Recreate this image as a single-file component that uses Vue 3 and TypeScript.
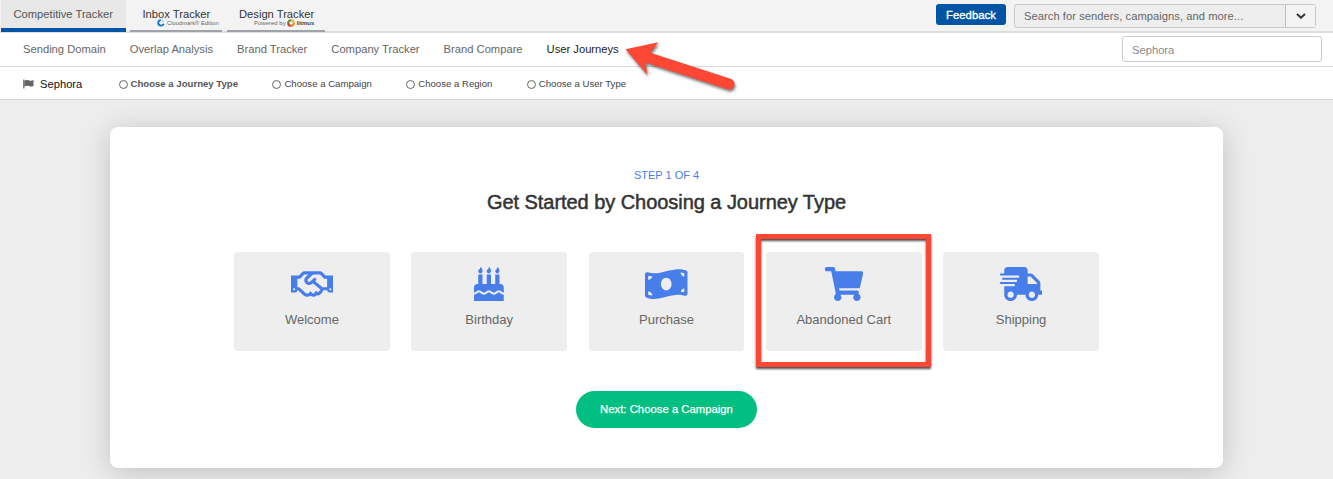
<script setup lang="ts">
interface Tile {
  label: string
  viewBox: string
  path: string
}

const flame = 'c-17.75 0-32-14.25-32-32 0-31 32-23 32-64 12 0 32 29.5 32 56s-14.25 40-32 40z'

const tiles: Tile[] = [
  {
    label: 'Welcome',
    viewBox: '0 0 640 512',
    path: 'M519.2 127.9l-47.6-47.6A56.252 56.252 0 0 0 432 64H205.2c-14.8 0-29.1 5.9-39.6 16.3L118 127.9H0v255.7h64c17.6 0 31.8-14.2 31.9-31.7h9.1l84.6 76.4c30.9 25.1 73.8 25.7 105.6 3.8 12.5 10.8 26 15.9 41.1 15.9 18.2 0 35.3-7.4 48.8-24 22.1 8.7 48.2 2.6 64-16.8l26.2-32.3c5.6-6.9 9.1-14.8 10.9-23h57.9c.1 17.5 14.4 31.7 31.9 31.7h64V127.9H519.2zM48 351.6c-8.8 0-16-7.2-16-16s7.2-16 16-16 16 7.2 16 16c0 8.9-7.2 16-16 16zm390-6.9l-26.1 32.2c-2.8 3.4-7.8 4-11.3 1.2l-23.9-19.4-30 36.5c-6 7.3-15 4.8-18 2.4l-36.8-31.5-15.6 19.2c-13.9 17.1-39.2 19.7-55.3 6.6l-97.3-88H96V175.8h41.9l61.7-61.6c2-.8 3.7-1.5 5.7-2.3H262l-38.7 35.5c-29.4 26.9-31.1 72.3-4.4 101.3 14.8 16.2 61.2 41.2 101.5 4.4l8.2-7.5 108.2 87.8c3.4 2.8 3.9 7.9 1.2 11.3zm106-40.8h-69.2c-2.3-2.8-4.9-5.4-7.7-7.7l-102.7-83.4 12.5-11.4c6.5-6 7-16.1 1-22.6L367 167.1c-6-6.5-16.1-6.9-22.6-1l-55.2 50.6c-9.5 8.7-25.7 9.4-34.6 0-9.3-9.9-8.5-25.1 1.2-33.9l65.6-60.2c7.4-6.8 17-10.5 27-10.5l83.7-.2c2.1 0 4.1.8 5.5 2.3l61.7 61.6H544v128zm48 47.7c-8.8 0-16-7.2-16-16s7.2-16 16-16 16 7.2 16 16c0 8.9-7.2 16-16 16z',
  },
  {
    label: 'Birthday',
    viewBox: '0 0 448 512',
    path:
      'M448 384c-28.02 0-31.26-32-74.5-32-43.43 0-46.825 32-74.75 32-27.695 0-31.454-32-74.75-32-42.842 0-47.218 32-74.5 32-28.148 0-31.202-32-74.75-32-43.547 0-46.653 32-74.75 32v-80c0-26.5 21.5-48 48-48h16V112h64v144h64V112h64v144h64V112h64v144h16c26.5 0 48 21.5 48 48v80zm0 128H0v-96c43.356 0 46.767-32 74.75-32 27.951 0 31.253 32 74.75 32 42.843 0 47.217-32 74.5-32 28.148 0 31.201 32 74.75 32 43.357 0 46.767-32 74.75-32 27.488 0 31.252 32 74.5 32v96z' +
      `M96 96${flame}M224 96${flame}M352 96${flame}`,
  },
  {
    label: 'Purchase',
    viewBox: '0 0 640 512',
    path: 'M621.16 54.46C582.37 38.19 543.55 32 504.75 32c-123.17-.01-246.33 62.34-369.5 62.34-30.89 0-61.76-3.92-92.65-13.72-3.47-1.1-6.95-1.62-10.35-1.62C15.04 79 0 92.32 0 110.81v317.26c0 12.63 7.23 24.6 18.84 29.46C57.63 473.81 96.45 480 135.25 480c123.17 0 246.34-62.35 369.51-62.35 30.89 0 61.76 3.92 92.65 13.72 3.47 1.1 6.95 1.62 10.35 1.62 17.21 0 32.25-13.32 32.25-31.81V83.93c-.01-12.64-7.24-24.6-18.85-29.47zM48 132.22c20.12 5.04 41.12 7.57 62.72 8.93C104.84 170.54 79 192.69 48 192.69v-60.47zm0 285v-47.78c34.37 0 62.18 27.27 63.71 61.4-22.53-1.81-43.59-6.31-63.71-13.62zM320 352c-44.19 0-80-42.99-80-96 0-53.02 35.82-96 80-96s80 42.98 80 96c0 53.03-35.83 96-80 96zm272 27.78c-17.52-4.39-35.71-6.85-54.32-8.44 5.87-26.08 27.5-45.88 54.32-49.28v57.72zm0-236.11c-30.89-3.91-54.86-29.7-55.81-61.55 19.54 2.17 38.09 6.23 55.81 12.66v48.89z',
  },
  {
    label: 'Abandoned Cart',
    viewBox: '0 0 576 512',
    path: 'M528.12 301.319l47.273-208C578.806 78.301 567.391 64 551.99 64H159.208l-9.166-44.81C147.758 8.021 137.93 0 126.529 0H24C10.745 0 0 10.745 0 24v16c0 13.255 10.745 24 24 24h69.883l70.248 343.435C147.325 417.1 136 435.222 136 456c0 30.928 25.072 56 56 56s56-25.072 56-56c0-15.674-6.447-29.835-16.824-40h209.647C430.447 426.165 424 440.326 424 456c0 30.928 25.072 56 56 56s56-25.072 56-56c0-22.172-12.888-41.332-31.579-50.405l5.517-24.276c3.413-15.018-8.002-29.319-23.403-29.319H218.117l-6.545-32h293.145c11.206 0 20.92-7.754 23.403-18.681z',
  },
  {
    label: 'Shipping',
    viewBox: '0 0 640 512',
    path: 'M624 352h-16V243.9c0-12.7-5.1-24.9-14.1-33.9L494 110.1c-9-9-21.2-14.1-33.9-14.1H416V48c0-26.5-21.5-48-48-48H112C85.5 0 64 21.5 64 48v48H8c-4.4 0-8 3.6-8 8v16c0 4.4 3.6 8 8 8h272c4.4 0 8 3.6 8 8v16c0 4.4-3.6 8-8 8H40c-4.4 0-8 3.6-8 8v16c0 4.4 3.6 8 8 8h208c4.4 0 8 3.6 8 8v16c0 4.4-3.6 8-8 8H8c-4.4 0-8 3.6-8 8v16c0 4.4 3.6 8 8 8h208c4.4 0 8 3.6 8 8v16c0 4.4-3.6 8-8 8H64v128c0 53 43 96 96 96s96-43 96-96h128c0 53 43 96 96 96s96-43 96-96h48c8.8 0 16-7.2 16-16v-32c0-8.8-7.2-16-16-16zM160 464c-26.5 0-48-21.5-48-48s21.5-48 48-48 48 21.5 48 48-21.5 48-48 48zm320 0c-26.5 0-48-21.5-48-48s21.5-48 48-48 48 21.5 48 48-21.5 48-48 48zm80-208H416V144h44.1l99.9 99.9V256z',
  },
]

const navItems = ['Sending Domain', 'Overlap Analysis', 'Brand Tracker', 'Company Tracker', 'Brand Compare', 'User Journeys']
const activeNav = 'User Journeys'
const steps = ['Choose a Journey Type', 'Choose a Campaign', 'Choose a Region', 'Choose a User Type']
const highlighted = 'Abandoned Cart'
</script>

<template>
  <div class="page">
    <header class="top">
      <div class="tab current"><span class="tab-name">Competitive Tracker</span></div>
      <div class="tab inbox">
        <span class="tab-name">Inbox Tracker</span>
        <span class="byline">
          <svg class="cloud" viewBox="0 0 8 8">
            <path d="M4.2 1.200A2.900 2.900 0 1 0 7 5" fill="none" stroke="#1672c4" stroke-width="2" />
            <path d="M4 1A3 3 0 0 1 6.9 3.8" fill="none" stroke="#b5d9f1" stroke-width="1.4" />
          </svg>
          <span>Cloudmark® Edition</span>
        </span>
      </div>
      <div class="tab design">
        <span class="tab-name">Design Tracker</span>
        <span class="byline">
          <span>Powered by</span>
          <svg class="litmus" viewBox="0 0 8 8">
            <g fill="none" stroke-width="2.1">
              <path d="M4 1.2A2.8 2.8 0 0 1 6.8 4" stroke="#f0ae20" />
              <path d="M6.8 4A2.8 2.8 0 0 1 4 6.8" stroke="#ef8b22" />
              <path d="M4 6.8A2.8 2.8 0 0 1 1.2 4" stroke="#cf3d2e" />
              <path d="M1.2 4A2.8 2.8 0 0 1 4 1.2" stroke="#5d8b3b" />
            </g>
          </svg>
          <b>litmus</b>
        </span>
      </div>
      <div class="tools">
        <button class="feedback">Feedback</button>
        <div class="search">
          <span class="search-text">Search for senders, campaigns, and more...</span>
          <span class="caret">
            <svg viewBox="0 0 10 6"><path d="M1 1l4 3.7L9 1" fill="none" stroke="#333" stroke-width="2" /></svg>
          </span>
        </div>
      </div>
    </header>

    <nav class="nav">
      <a v-for="item in navItems" :key="item" :class="{ active: item === activeNav }">{{ item }}</a>
      <div class="brand-input">Sephora</div>
    </nav>

    <div class="steps">
      <div class="brand">
        <svg class="flag" viewBox="0 0 11 10">
          <path d="M.8 .5v9" stroke="#666" stroke-width="1.2" />
          <path d="M1.300 1.600C3.200.8 4.700.7 6.100 1.400s2.600.4 4.400-.3v5.900c-1.800.8-3 .8-4.400.1S3.200 6.600 1.300 7.500z" fill="#666" />
        </svg>
        <span>Sephora</span>
      </div>
      <div v-for="(step, i) in steps" :key="step" class="step" :class="{ bold: i === 0 }">
        <i class="ring"></i><span>{{ step }}</span>
      </div>
    </div>

    <main class="card">
      <div class="count">STEP 1 OF 4</div>
      <h1>Get Started by Choosing a Journey Type</h1>
      <div class="tiles">
        <div v-for="tile in tiles" :key="tile.label" class="tile">
          <svg class="tile-icon" :viewBox="tile.viewBox"><path :d="tile.path" /></svg>
          <span>{{ tile.label }}</span>
          <div v-if="tile.label === highlighted" class="marker"></div>
        </div>
      </div>
      <button class="next">Next: Choose a Campaign</button>
    </main>

    <svg class="arrow" viewBox="0 0 140 70">
      <path d="M25.500 19.300L58.300 12.300L50.300 22.700L130.500 48.800A5.300 5.300 0 0 1 127.300 59.300L45.500 32.500L47.300 44.800Z" fill="#fd4735" />
    </svg>
  </div>
</template>

<style>
body {
  margin: 0;
}
</style>

<style scoped>
.page {
  position: relative;
  height: 479px;
  overflow: hidden;
  background: #ededed;
  font: 11.2px/14px "Liberation Sans", Arial, sans-serif;
  color: #666;
}
.page * {
  box-sizing: border-box;
  white-space: nowrap;
}
button {
  border: 0;
  padding: 0;
  font: inherit;
}
.top {
  display: flex;
  height: 33px;
  padding-left: 1px;
  background: #f3f3f3;
  border-bottom: 2px solid #ddd;
}
.tab {
  height: 32px;
  padding-top: 7px;
  border-bottom: 2px solid #9da3a9;
  color: #333;
}
.tab-name {
  display: block;
}
.current {
  width: 125px;
  padding-left: 12.500px;
  background: #e8e8e8;
  border-bottom: 4px solid #0054a4;
  color: #555;
}
.inbox {
  width: 92px;
  margin-left: 4px;
  padding-left: 12.500px;
}
.design {
  width: 98px;
  margin-left: 5px;
  padding-left: 12px;
}
.byline {
  display: flex;
  align-items: center;
  height: 8px;
  margin-top: -2px;
  font-size: 6px;
  line-height: 8px;
  color: #666;
}
.inbox .byline {
  padding-left: 14.500px;
  gap: 2.500px;
  font-size: 5.8px;
}
.design .byline {
  padding-left: 15px;
  gap: 1.500px;
}
.byline b {
  color: #444;
}
.cloud {
  width: 7.500px;
  height: 7.500px;
}
.litmus {
  width: 8px;
  height: 8px;
}
.tools {
  display: flex;
  margin-left: auto;
  padding: 4px 17px 0 0;
  gap: 8px;
}
.feedback {
  width: 70px;
  height: 21px;
  border-radius: 3px;
  background: #0054a4;
  color: #fff;
  letter-spacing: 0.1px;
  -webkit-text-stroke: 0.35px #fff;
}
.search {
  display: flex;
  width: 302px;
  height: 24px;
  border: 1px solid #c8c8c8;
  border-radius: 3px;
  background: #eee;
  line-height: 22px;
}
.search-text {
  flex: 1;
  padding-left: 9px;
  letter-spacing: 0.04px;
}
.caret {
  display: flex;
  width: 30px;
  align-items: center;
  justify-content: center;
  border-left: 1px solid #bbb;
  background: #f3f3f3;
}
.caret svg {
  width: 10px;
  height: 6px;
}
.nav {
  display: flex;
  height: 34px;
  padding: 0 11px 0 23px;
  gap: 24px;
  background: #fff;
  border-bottom: 1px solid #d8d8d8;
  line-height: 33px;
}
.nav .active {
  color: #222;
}
.brand-input {
  width: 200px;
  height: 26px;
  margin: 3px 0 0 auto;
  padding-left: 9px;
  border: 1px solid #ccc;
  border-radius: 3px;
  line-height: 26px;
  color: #888;
}
.steps {
  display: flex;
  align-items: center;
  height: 33px;
  padding: 2px 0 0 23px;
  background: #fff;
  border-bottom: 1px solid #d8d8d8;
  font-size: 9.6px;
  color: #444;
}
.brand {
  display: flex;
  align-items: center;
  width: 95.500px;
  gap: 6px;
  font-size: 11.2px;
  color: #111;
}
.flag {
  width: 11px;
  height: 10px;
}
.step {
  display: flex;
  align-items: center;
  gap: 3px;
  margin-right: 34.400px;
}
.bold {
  font-weight: bold;
  color: #555;
}
.ring {
  width: 9px;
  height: 9px;
  border: 1px solid #666;
  border-radius: 50%;
}
.card {
  display: flex;
  flex-direction: column;
  align-items: center;
  width: 1113px;
  height: 341px;
  margin: 27px 0 0 110px;
  padding-top: 41px;
  border-radius: 8px;
  background: #fff;
  box-shadow: 0 4px 28px rgba(0, 0, 0, 0.19);
}
.count {
  font-size: 11px;
  color: #477ee9;
}
h1 {
  margin: 8px 0 0;
  font-size: 20px;
  font-weight: normal;
  line-height: 24px;
  letter-spacing: -0.05px;
  color: #333;
  -webkit-text-stroke: 0.5px #333;
}
.tiles {
  display: flex;
  gap: 21.700px;
  margin-top: 38px;
}
.tile {
  position: relative;
  display: flex;
  flex-direction: column;
  align-items: center;
  width: 155.600px;
  height: 99px;
  padding-top: 15px;
  border-radius: 4px;
  background: #eee;
  font-size: 13px;
  line-height: 16px;
}
.tile-icon {
  height: 34px;
  margin-bottom: 11px;
  fill: #477ee9;
}
.marker {
  position: absolute;
  inset: -18px -9.400px -16px -10px;
  border: 5px solid #fd4735;
  filter: drop-shadow(0 2px 1px rgba(0, 0, 0, 0.7));
}
.next {
  width: 181px;
  height: 37px;
  margin-top: 40px;
  padding-bottom: 2px;
  border-radius: 19px;
  background: #00bf80;
  color: #fff;
  letter-spacing: 0.07px;
  -webkit-text-stroke: 0.25px #fff;
}
.arrow {
  position: absolute;
  left: 600px;
  top: 30px;
  width: 140px;
  height: 70px;
  overflow: visible;
  filter: drop-shadow(1px 2px 1.500px rgba(0, 0, 0, 0.55));
}
</style>
